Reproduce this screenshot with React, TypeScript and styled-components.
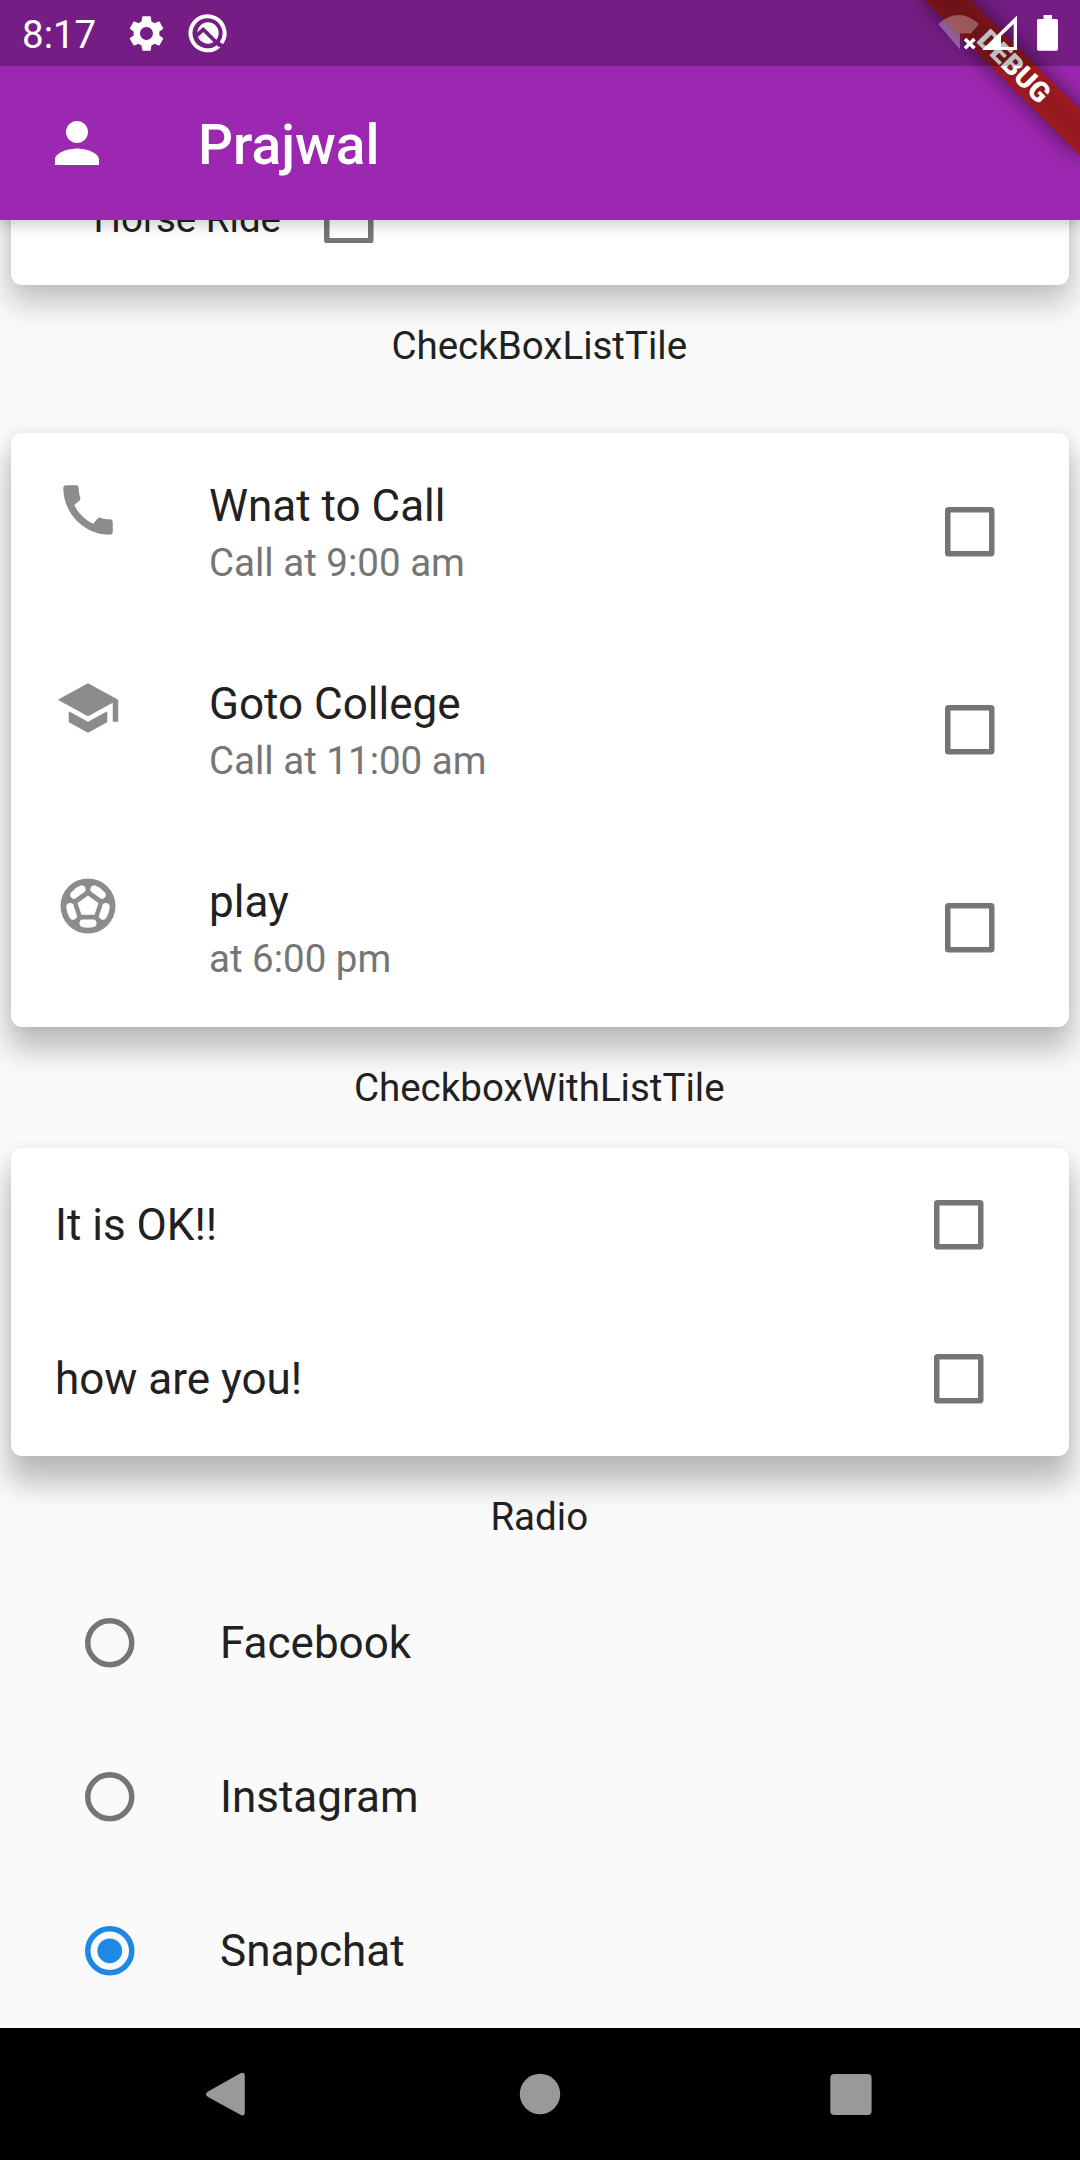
import React from "react";
import styled, { createGlobalStyle } from "styled-components";

const GlobalStyle = createGlobalStyle`
  * { box-sizing: border-box; }
  body { margin: 0; background: #fafafa; }
`;

const Screen = styled.div`
  position: relative;
  display: flex;
  flex-direction: column;
  width: 1080px;
  height: 2160px;
  overflow: hidden;
  background: #fafafa;
  color: #212121;
  font-family: Roboto, "Liberation Sans", sans-serif;
`;

const Header = styled.header`
  position: relative;
  z-index: 1;
  flex: none;
  display: flex;
  flex-direction: column;
  height: 220px;
  background: #9c27b0;
  box-shadow: 0 5px 14px rgba(0, 0, 0, 0.2);
`;

const StatusBar = styled.div`
  position: relative;
  z-index: 2;
  display: flex;
  align-items: center;
  height: 66px;
  padding: 0 22px;
  background: rgba(0, 0, 0, 0.25);
  color: #fff;
`;

const Clock = styled.span`
  width: 103px;
  font-size: 38.5px;
  line-height: 45px;
  padding-top: 2px;
`;

const StatusIcons = styled.div`
  display: flex;
  align-items: center;
  gap: 18.8px;
`;

const SystemIcons = styled.svg`
  display: block;
  width: 124px;
  height: 66px;
  margin-left: auto;
  margin-right: -2px;
`;

const Toolbar = styled.div`
  display: flex;
  align-items: center;
  gap: 88px;
  height: 154px;
  padding: 0 44px;
  color: #fff;
`;

const Title = styled.h1`
  margin: 0;
  padding-top: 3px;
  font-size: 55px;
  font-weight: 500;
  line-height: 64px;
`;

const DebugBanner = styled.div`
  position: absolute;
  z-index: 1;
  left: 903.9px;
  top: 49.6px;
  width: 220px;
  height: 33px;
  transform: rotate(45deg);
  color: #fff;
  font-size: 28px;
  font-weight: 900;
  line-height: 33px;
  text-align: center;

  &::before {
    content: "";
    position: absolute;
    inset: 0;
    background: rgba(0, 0, 0, 0.52);
    filter: blur(11px);
  }
`;

const BannerLabel = styled.span`
  position: relative;
  display: block;
  background: linear-gradient(#9f1a26, #92181c 45%, #92181c 55%, #9f1a26);
`;

const Body = styled.main`
  flex: 1;
  min-height: 0;
  overflow: hidden;
  display: flex;
  flex-direction: column;
  justify-content: flex-end;
`;

const Card = styled.section<{ $drop: number; $shade?: number }>`
  position: relative;
  flex: none;
  margin: 11px;
  border-radius: 11px;
  background: #fff;
  box-shadow:
    0 ${(p) => p.$drop}px 30px 3px rgba(0, 0, 0, ${(p) => p.$shade ?? 0.25}),
    0 0 14px rgba(0, 0, 0, 0.06);
`;

const SectionLabel = styled.h2<{ $before?: number; $after?: number }>`
  position: relative;
  z-index: 1;
  flex: none;
  height: 44px;
  margin: ${(p) => p.$before ?? 27.5}px 0 ${(p) => p.$after ?? 27.5}px;
  padding-right: 1.5px;
  font-size: 38.5px;
  font-weight: 400;
  line-height: 44px;
  text-align: center;
`;

const InlineRow = styled.div`
  display: flex;
  align-items: center;
  gap: 2px;
  height: 132px;
  padding-left: 82.5px;
  font-size: 38.5px;
`;

const Tile = styled.div<{ $tall?: boolean }>`
  display: flex;
  align-items: center;
  height: ${(p) => (p.$tall ? 198 : 154)}px;
  padding: 0 44px;
  font-size: 44px;
  line-height: 52px;
`;

const Leading = styled.div`
  align-self: flex-start;
  width: 154px;
  padding-top: 44px;
`;

const TileText = styled.div`
  flex: 1;
  align-self: flex-start;
  padding-top: 47px;
`;

const Subtitle = styled.div`
  margin-top: 8px;
  color: #757575;
  font-size: 38.5px;
  line-height: 45px;
`;

const Grow = styled.span`
  flex: 1;
`;

const Control = styled.span<{ $width?: number }>`
  display: flex;
  align-items: center;
  justify-content: center;
  width: ${(p) => p.$width ?? 132}px;
  height: 110px;
`;

const Glyph = styled.svg<{ $size: number }>`
  display: block;
  width: ${(p) => p.$size}px;
  height: ${(p) => p.$size}px;
  fill: currentColor;
`;

const TileGlyph = styled(Glyph)`
  color: #8c8c8c;
`;

const RadioTile = styled(Tile)`
  flex: none;
  gap: 44px;
`;

const NavBar = styled.nav`
  position: relative;
  z-index: 1;
  flex: none;
  display: flex;
  align-items: center;
  justify-content: center;
  gap: 221px;
  height: 132px;
  background: #000;
  color: #999;
`;

const Checkbox = ({ width }: { width?: number }) => (
  <Control $width={width}>
    <Glyph $size={49.5} viewBox="0 0 18 18">
      <rect x="1" y="1" width="16" height="16" rx="0.3" fill="none" stroke="#757575" strokeWidth="2" strokeLinejoin="round" />
    </Glyph>
  </Control>
);

const Radio = ({ selected }: { selected?: boolean }) => {
  const color = selected ? "#1e88e5" : "#757575";
  return (
    <Control>
      <Glyph $size={49.5} viewBox="0 0 18 18">
        <circle cx="9" cy="9" r="8" fill="none" stroke={color} strokeWidth="2" />
        {selected && <circle cx="9" cy="9" r="4.5" fill={color} />}
      </Glyph>
    </Control>
  );
};

const SETTINGS =
  "M19.14 12.94c.04-.3.06-.61.06-.94 0-.32-.02-.64-.07-.94l2.03-1.58c.18-.14.23-.41.12-.61l-1.92-3.32c-.12-.22-.37-.29-.59-.22l-2.39.96c-.5-.38-1.03-.7-1.62-.94l-.36-2.54c-.04-.24-.24-.41-.48-.41h-3.84c-.24 0-.43.17-.47.41l-.36 2.54c-.59.24-1.13.57-1.62.94l-2.39-.96c-.22-.08-.47 0-.59.22L2.74 8.87c-.12.21-.08.47.12.61l2.03 1.58c-.05.3-.09.63-.09.94s.02.64.07.94l-2.03 1.58c-.18.14-.23.41-.12.61l1.92 3.32c.12.22.37.29.59.22l2.39-.96c.5.38 1.03.7 1.62.94l.36 2.54c.05.24.24.41.48.41h3.84c.24 0 .44-.17.47-.41l.36-2.54c.59-.24 1.13-.56 1.62-.94l2.39.96c.22.08.47 0 .59-.22l1.92-3.32c.12-.22.07-.47-.12-.61l-2.01-1.58zM12 15.6c-1.98 0-3.6-1.62-3.6-3.6s1.62-3.6 3.6-3.6 3.6 1.62 3.6 3.6-1.62 3.6-3.6 3.6z";
const PERSON =
  "M12 12c2.21 0 4-1.79 4-4s-1.79-4-4-4-4 1.79-4 4 1.79 4 4 4zm0 2c-2.67 0-8 1.34-8 4v2h16v-2c0-2.66-5.33-4-8-4z";
const PHONE =
  "M20.01 15.38c-1.23 0-2.42-.2-3.53-.56-.35-.12-.74-.03-1.01.24l-1.57 1.97c-2.83-1.35-5.48-3.9-6.89-6.83l1.95-1.66c.27-.28.35-.67.24-1.02-.37-1.11-.56-2.3-.56-3.53 0-.54-.45-.99-.99-.99H4.19C3.65 3 3 3.24 3 3.99 3 13.28 10.73 21 20.01 21c.71 0 .99-.63.99-1.18v-3.45c0-.54-.45-.99-.99-.99z";
const SCHOOL = "M5 13.18v4L12 21l7-3.82v-4L12 17l-7-3.82zM12 3L1 9l11 6 9-4.91V17h2V9L12 3z";

const PhoneIcon = () => (
  <TileGlyph $size={66} viewBox="0 0 24 24">
    <path d={PHONE} />
  </TileGlyph>
);

const SchoolIcon = () => (
  <TileGlyph $size={66} viewBox="0 0 24 24">
    <path d={SCHOOL} />
  </TileGlyph>
);

const SoccerIcon = () => (
  <TileGlyph $size={66} viewBox="0 0 24 24">
    <circle cx="12" cy="12" r="10" />
    <path fill="#fff" d="M12 8.2L15.8 10.9L14.4 15.15H9.6L8.2 10.9Z" />
    {[0, 72, 144, 216, 288].map((angle) => (
      <path
        key={angle}
        fill="#fff"
        transform={`rotate(${angle} 12 12)`}
        d="M9.9 16.9H14.1Q14.6 16.9 14.8 17.3L15.1 18Q15.2 18.3 15.1 18.6L14.8 19.2Q14.6 19.5 14.2 19.6Q12 20.2 9.8 19.6Q9.4 19.5 9.2 19.2L8.9 18.6Q8.8 18.3 8.9 18L9.2 17.3Q9.4 16.9 9.9 16.9Z"
      />
    ))}
  </TileGlyph>
);

const ProgressIcon = () => (
  <Glyph $size={42} viewBox="0 0 42 42">
    <path d="M31.9 33.9A17 17 0 1 1 34.4 31.1" fill="none" stroke="#fff" strokeWidth="4" />
    <circle cx="21" cy="21" r="10.7" />
    <path d="M9 24L16.3 17.5L33 34" fill="none" stroke="#751d84" strokeWidth="3.8" />
  </Glyph>
);

const reminders = [
  { title: "Wnat to Call", note: "Call at 9:00 am", Icon: PhoneIcon },
  { title: "Goto College", note: "Call at 11:00 am", Icon: SchoolIcon },
  { title: "play", note: "at 6:00 pm", Icon: SoccerIcon },
];

const networks = ["Facebook", "Instagram", "Snapchat"];

export default function App() {
  return (
    <>
      <GlobalStyle />
      <Screen>
        <Header>
          <StatusBar>
            <Clock>8:17</Clock>
            <StatusIcons>
              <Glyph $size={43} viewBox="0 0 24 24">
                <path d={SETTINGS} />
              </Glyph>
              <ProgressIcon />
            </StatusIcons>
            <SystemIcons viewBox="936 0 124 66">
              <path d="M938.3 24Q958.500 6 979 24L971 33.500H960V49.500Z" fill="#fff" fillOpacity="0.3" />
              <path d="M965 39L974.500 48.300M974.500 39L965 48.300" stroke="#fff" strokeWidth="3.600" />
              <path
                fill="#fff"
                fillRule="evenodd"
                d="M982 50L1017 15.500V50ZM1001 36V47H1013.700V24Z"
              />
              <path d="M1043.500 15H1052V19H1056.500Q1058 19 1058 20.500V49Q1058 50.700 1056.500 50.700H1038.500Q1037 50.700 1037 49V20.500Q1037 19 1038.500 19H1043.500Z" fill="#fff" />
            </SystemIcons>
          </StatusBar>
          <Toolbar>
            <Glyph $size={66} viewBox="0 0 24 24">
              <path d={PERSON} />
            </Glyph>
            <Title>Prajwal</Title>
          </Toolbar>
          <DebugBanner>
            <BannerLabel>DEBUG</BannerLabel>
          </DebugBanner>
        </Header>

        <Body>
          <Card $drop={16} $shade={0.22}>
            <InlineRow>
              Horse Ride
              <Checkbox />
            </InlineRow>
          </Card>
          <SectionLabel $before={28} $after={54.5}>CheckBoxListTile</SectionLabel>
          <Card $drop={20}>
            {reminders.map(({ title, note, Icon }) => (
              <Tile key={title} $tall>
                <Leading>
                  <Icon />
                </Leading>
                <TileText>
                  {title}
                  <Subtitle>{note}</Subtitle>
                </TileText>
                <Checkbox width={110} />
              </Tile>
            ))}
          </Card>
          <SectionLabel>CheckboxWithListTile</SectionLabel>
          <Card $drop={24}>
            {["It is OK!!", "how are you!"].map((text) => (
              <Tile key={text}>
                <Grow>{text}</Grow>
                <Checkbox />
              </Tile>
            ))}
          </Card>
          <SectionLabel>Radio</SectionLabel>
          {networks.map((name) => (
            <RadioTile key={name}>
              <Radio selected={name === "Snapchat"} />
              {name}
            </RadioTile>
          ))}
        </Body>

        <NavBar>
          <Glyph $size={90} viewBox="0 0 90 90">
            <path d="M24 42.500L56 24.500Q60.800 22 60.800 27V63Q60.800 68.500 56 65.500L24 48Q20 45.200 24 42.500Z" />
          </Glyph>
          <Glyph $size={90} viewBox="0 0 90 90">
            <circle cx="45" cy="45" r="20.200" />
          </Glyph>
          <Glyph $size={90} viewBox="0 0 90 90">
            <rect x="24.300" y="25" width="41.300" height="41" rx="4" />
          </Glyph>
        </NavBar>
      </Screen>
    </>
  );
}
